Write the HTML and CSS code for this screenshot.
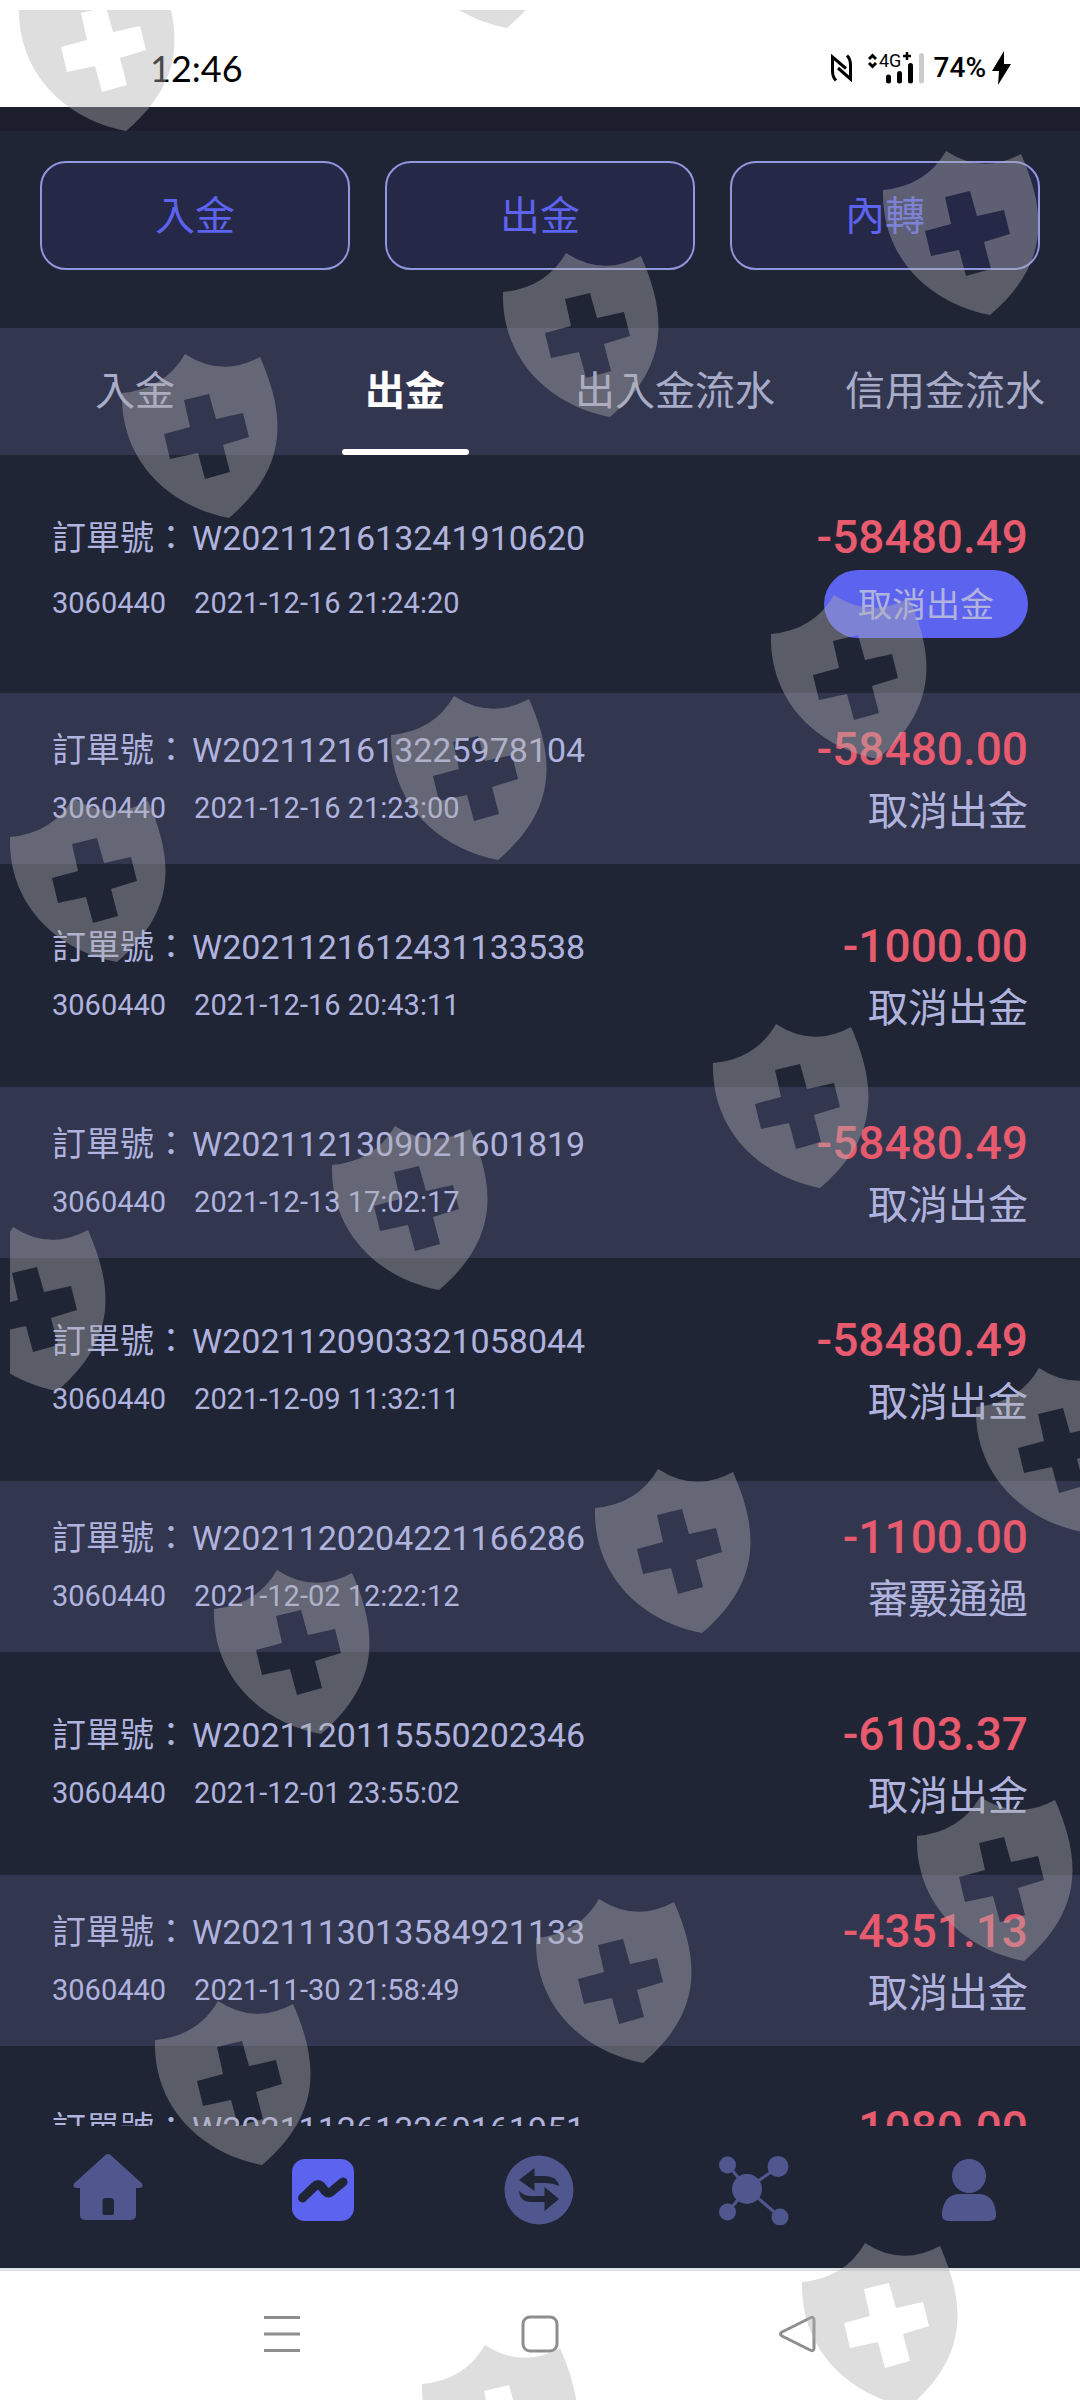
FILE: index.html
```html
<!DOCTYPE html>
<html lang="zh-Hant">
<head>
  <meta charset="UTF-8" />
  <meta name="viewport" content="width=device-width, initial-scale=1.0"/>
  <title>出金</title>
  <link rel="stylesheet" href="styles.css">
</head>
<body>

  <div class="app">
    <div class="status-bar">
      <span class="clock">12:46</span>
      <div class="status-icons">
        <svg class="icon-nfc" viewBox="0 0 24 28" width="24" height="28">
          <path d="M6 26.500Q2.500 23 2.500 17V3L16 14.500M17 1.500Q20.500 5 20.500 11V25L8 14" fill="none" stroke="#000" stroke-width="3"/>
        </svg>
        <svg class="icon-signal" viewBox="0 0 60 36" width="60" height="36">
          <path d="M3 9L6.500 5.500L10 9M3 13L6.500 16.500L10 13" fill="none" stroke="#000" stroke-width="3"/>
          <text x="13" y="17" class="net">4G</text>
          <path d="M37 6H45M41 2V10" stroke="#000" stroke-width="2.500"/>
          <path d="M22.500 31V27M33.500 31V23.500M44.500 31V15.500" stroke="#000" stroke-width="5" stroke-linecap="round"/>
          <path d="M55.500 31V5.500" stroke="#ccc" stroke-width="5" stroke-linecap="round"/>
        </svg>
        <span class="battery">74%</span>
        <svg class="icon-bolt" viewBox="0 0 20 34" width="20" height="34">
          <path d="M12 0L0 20H7L6 34L19 13H12Z" fill="#000"/>
        </svg>
      </div>
    </div>

    <div class="actions">
      <button type="button" class="action-btn">入金</button>
      <button type="button" class="action-btn">出金</button>
      <button type="button" class="action-btn">內轉</button>
    </div>

    <nav class="tabs">
      <a href="#deposit" class="tab">入金</a>
      <a href="#withdraw" class="tab active">出金</a>
      <a href="#flow" class="tab">出入金流水</a>
      <a href="#credit" class="tab">信用金流水</a>
    </nav>

    <main class="orders">
      <div class="order">
        <span class="order-no"><span>訂單號：</span><span>W2021121613241910620</span></span>
        <span class="amount">-58480.49</span>
        <span class="meta"><span>3060440</span><span>2021-12-16 21:24:20</span></span>
        <button type="button" class="cancel-btn">取消出金</button>
      </div>
      <div class="order">
        <span class="order-no"><span>訂單號：</span><span>W2021121613225978104</span></span>
        <span class="amount">-58480.00</span>
        <span class="meta"><span>3060440</span><span>2021-12-16 21:23:00</span></span>
        <span class="state">取消出金</span>
      </div>
      <div class="order">
        <span class="order-no"><span>訂單號：</span><span>W2021121612431133538</span></span>
        <span class="amount">-1000.00</span>
        <span class="meta"><span>3060440</span><span>2021-12-16 20:43:11</span></span>
        <span class="state">取消出金</span>
      </div>
      <div class="order">
        <span class="order-no"><span>訂單號：</span><span>W2021121309021601819</span></span>
        <span class="amount">-58480.49</span>
        <span class="meta"><span>3060440</span><span>2021-12-13 17:02:17</span></span>
        <span class="state">取消出金</span>
      </div>
      <div class="order">
        <span class="order-no"><span>訂單號：</span><span>W2021120903321058044</span></span>
        <span class="amount">-58480.49</span>
        <span class="meta"><span>3060440</span><span>2021-12-09 11:32:11</span></span>
        <span class="state">取消出金</span>
      </div>
      <div class="order">
        <span class="order-no"><span>訂單號：</span><span>W2021120204221166286</span></span>
        <span class="amount">-1100.00</span>
        <span class="meta"><span>3060440</span><span>2021-12-02 12:22:12</span></span>
        <span class="state">審覈通過</span>
      </div>
      <div class="order">
        <span class="order-no"><span>訂單號：</span><span>W2021120115550202346</span></span>
        <span class="amount">-6103.37</span>
        <span class="meta"><span>3060440</span><span>2021-12-01 23:55:02</span></span>
        <span class="state">取消出金</span>
      </div>
      <div class="order">
        <span class="order-no"><span>訂單號：</span><span>W2021113013584921133</span></span>
        <span class="amount">-4351.13</span>
        <span class="meta"><span>3060440</span><span>2021-11-30 21:58:49</span></span>
        <span class="state">取消出金</span>
      </div>
      <div class="order">
        <span class="order-no"><span>訂單號：</span><span>W2021112613260161951</span></span>
        <span class="amount">-1080.00</span>
      </div>
    </main>

    <nav class="bottom-nav">
      <a href="#home" aria-label="Home">
        <svg viewBox="0 0 72 72" width="72" height="72">
          <path fill-rule="evenodd" d="M33.500 2Q36 0 38.500 2L70 30.500Q72 35 67 35H64V62Q64 67 58 67H14Q8 67 8 62V35H5Q0 35 2 30.500ZM34 45Q30.500 45 30.500 48V60Q30.500 62 32.500 62H40Q42 62 42 60V48Q42 45 38.500 45Z"/>
        </svg>
      </a>
      <a href="#trade" aria-label="Trade" class="active">
        <svg viewBox="0 0 72 72" width="72" height="72">
          <rect x="5" y="6" width="62" height="62" rx="13"/>
          <path class="cut" d="M15.500 45L28 33Q31 30 34 33L38 38Q41 41 44 39L56 29"/>
        </svg>
      </a>
      <a href="#transfer" aria-label="Transfer">
        <svg viewBox="0 0 72 72" width="72" height="72">
          <circle cx="36" cy="37" r="34.500"/>
          <path class="hole" d="M16 27L31.500 15V23H42Q54 23 56 33Q50 30 43 30H31.500V38Z"/>
          <path class="hole" d="M56 46L41.500 58V49H28Q17 49 16 38Q21 43 28 43H41.500V34Z"/>
        </svg>
      </a>
      <a href="#network" aria-label="Network">
        <svg viewBox="0 0 72 72" width="72" height="72">
          <path class="link" d="M10 12L29 35.500L62 13M29 35.500L10 59M29 35.500L62 64"/>
          <circle cx="9.500" cy="12" r="8.500"/><circle cx="60" cy="13.500" r="10.500"/>
          <circle cx="29" cy="36" r="15"/>
          <circle cx="9.500" cy="59" r="8.500"/><circle cx="62" cy="64" r="8.500"/>
        </svg>
      </a>
      <a href="#me" aria-label="Me">
        <svg viewBox="0 0 72 72" width="72" height="72">
          <circle cx="36" cy="23" r="17"/>
          <path d="M9 60Q11 41 27 41H45Q61 41 63 60Q64 68 56 68H16Q8 68 9 60Z"/>
        </svg>
      </a>
    </nav>

    <div class="system-nav">
      <button type="button" aria-label="Menu">
        <svg viewBox="0 0 40 40" width="40" height="40"><path d="M2 3.500H38M2 20H38M2 36.500H38"/></svg>
      </button>
      <button type="button" aria-label="Home">
        <svg viewBox="0 0 40 40" width="40" height="40"><rect x="3" y="3" width="34" height="34" rx="7"/></svg>
      </button>
      <button type="button" aria-label="Back">
        <svg viewBox="0 0 40 40" width="40" height="40"><path d="M4 18L32 4Q36 2 36 6V34Q36 38 32 36L4 22Q1 20 4 18Z"/></svg>
      </button>
    </div>

    <svg class="watermark" aria-hidden="true">
      <defs>
        <path id="shield" fill-rule="evenodd" d="M63 0Q100 24 138 3C163 60 168 112 107 164C45 152 -2 105 0 39Q43 35 63 0ZM62 46L68 73L42 80L48 105L76 99L83 125L108 118L101 91L127 83L121 59L94 65L87 40Z"/>
      </defs>
      <use href="#shield" x="9" y="-43"/>
      <use href="#shield" x="390" y="-146"/>
      <use href="#shield" x="873" y="141"/>
      <use href="#shield" x="493" y="243"/>
      <use href="#shield" x="112" y="344"/>
      <use href="#shield" x="761" y="585"/>
      <use href="#shield" x="381" y="686"/>
      <use href="#shield" x="0" y="788"/>
      <use href="#shield" x="703" y="1014"/>
      <use href="#shield" x="322" y="1116"/>
      <use href="#shield" x="-60" y="1217"/>
      <use href="#shield" x="966" y="1358"/>
      <use href="#shield" x="585" y="1459"/>
      <use href="#shield" x="204" y="1560"/>
      <use href="#shield" x="907" y="1787"/>
      <use href="#shield" x="526" y="1889"/>
      <use href="#shield" x="145" y="1991"/>
      <use href="#shield" x="792" y="2233"/>
      <use href="#shield" x="412" y="2335"/>
    </svg>
  </div>

</body>
</html>
```

FILE: styles.css
```css
:root {
  --bg: #202536;
  --panel: #32364f;
  --text: #b0b3de;
  --primary: #5c63ee;
  --red: #e85a6d;
  --icon: #50578f;
}
* {
  box-sizing: border-box;
}
body {
  margin: 0;
  font-family: Roboto, "Noto Sans CJK TC", sans-serif;
  background: var(--bg);
  color: var(--text);
}
a {
  text-decoration: none;
  color: inherit;
}
button {
  font-family: inherit;
  cursor: pointer;
}
.app {
  position: relative;
  display: flex;
  flex-direction: column;
  height: 100vh;
  overflow: hidden;
}

/* phone status bar */
.status-bar {
  display: flex;
  justify-content: space-between;
  align-items: center;
  height: 107px;
  padding: 28px 68px 0 150px;
  background: #fff;
  color: #000;
}
.clock {
  font-family: Lato, sans-serif;
  font-size: 36px;
}
.status-icons {
  display: flex;
  align-items: center;
}
.icon-nfc {
  margin-right: 12px;
}
.icon-signal {
  margin-right: 8px;
}
.net {
  font-size: 18px;
}
.battery {
  font-size: 28px;
  font-weight: 500;
  margin-right: 6px;
}

/* deposit / withdraw / transfer */
.actions {
  display: flex;
  gap: 35px;
  padding: 30px 40px 58px;
  border-top: 24px solid #1c1e2e;
}
.action-btn {
  flex: 1;
  height: 109px;
  padding: 0 0 6px;
  font-size: 40px;
  color: var(--primary);
  background: #262848;
  border: 2px solid #9196de;
  border-radius: 26px;
}
.tabs {
  display: flex;
  height: 127px;
  background: var(--panel);
}
.tab {
  flex: 1;
  display: flex;
  flex-direction: column;
  align-items: center;
  justify-content: space-between;
  padding-top: 34px;
  font-size: 40px;
  line-height: 60px;
  white-space: nowrap;
  color: #a9acc9;
}
.tab.active {
  color: #fff;
  font-weight: 700;
}
.tab.active::after {
  content: "";
  width: 127px;
  height: 6px;
  border-radius: 3px;
  background: #fff;
}

/* order list */
.orders {
  flex: 1;
  min-height: 0;
  overflow: hidden;
}
.order {
  display: grid;
  grid-template-columns: 1fr auto;
  row-gap: 6px;
  align-items: center;
  margin-top: 26px;
  padding: 29px 52px;
}
.order:nth-child(even) {
  background: var(--panel);
}
.order-no {
  display: flex;
  gap: 4px;
  padding-top: 2px;
  font-size: 34px;
  line-height: 52px;
}
.amount {
  font-size: 46px;
  font-weight: 500;
  line-height: 54px;
  text-align: right;
  color: var(--red);
}
.meta {
  display: flex;
  gap: 28px;
  padding-bottom: 2px;
  font-size: 29px;
}
.state {
  padding-top: 6px;
  font-size: 40px;
  line-height: 47px;
  text-align: right;
}
.cancel-btn {
  height: 68px;
  padding: 0 34px 4px;
  font-size: 34px;
  color: var(--text);
  background: var(--primary);
  border: none;
  border-radius: 34px;
  justify-self: end;
}

.bottom-nav {
  display: flex;
  align-items: center;
  height: 142px;
  padding: 0 3px 16px 0;
}
.bottom-nav a {
  flex: 1;
  display: flex;
  justify-content: center;
  fill: var(--icon);
}
.bottom-nav .active {
  fill: var(--primary);
}
.bottom-nav .cut {
  fill: none;
  stroke: var(--bg);
  stroke-width: 9;
  stroke-linecap: round;
}
.bottom-nav .hole {
  fill: var(--bg);
}
.bottom-nav .link {
  fill: none;
  stroke: var(--icon);
  stroke-width: 3;
}

/* android navigation buttons */
.system-nav {
  display: flex;
  justify-content: center;
  align-items: center;
  gap: 218px;
  height: 132px;
  padding-bottom: 4px;
  background: #fff;
  border-top: 3px solid #dce3e4;
}
.system-nav button {
  display: flex;
  padding: 0;
  background: none;
  border: none;
}
.system-nav svg {
  fill: none;
  stroke: #8e8e8e;
  stroke-width: 3;
}

.watermark {
  position: absolute;
  top: 10px;
  left: 10px;
  width: 100%;
  height: 100%;
  fill: rgba(174, 174, 174, 0.41);
  pointer-events: none;
}
```
